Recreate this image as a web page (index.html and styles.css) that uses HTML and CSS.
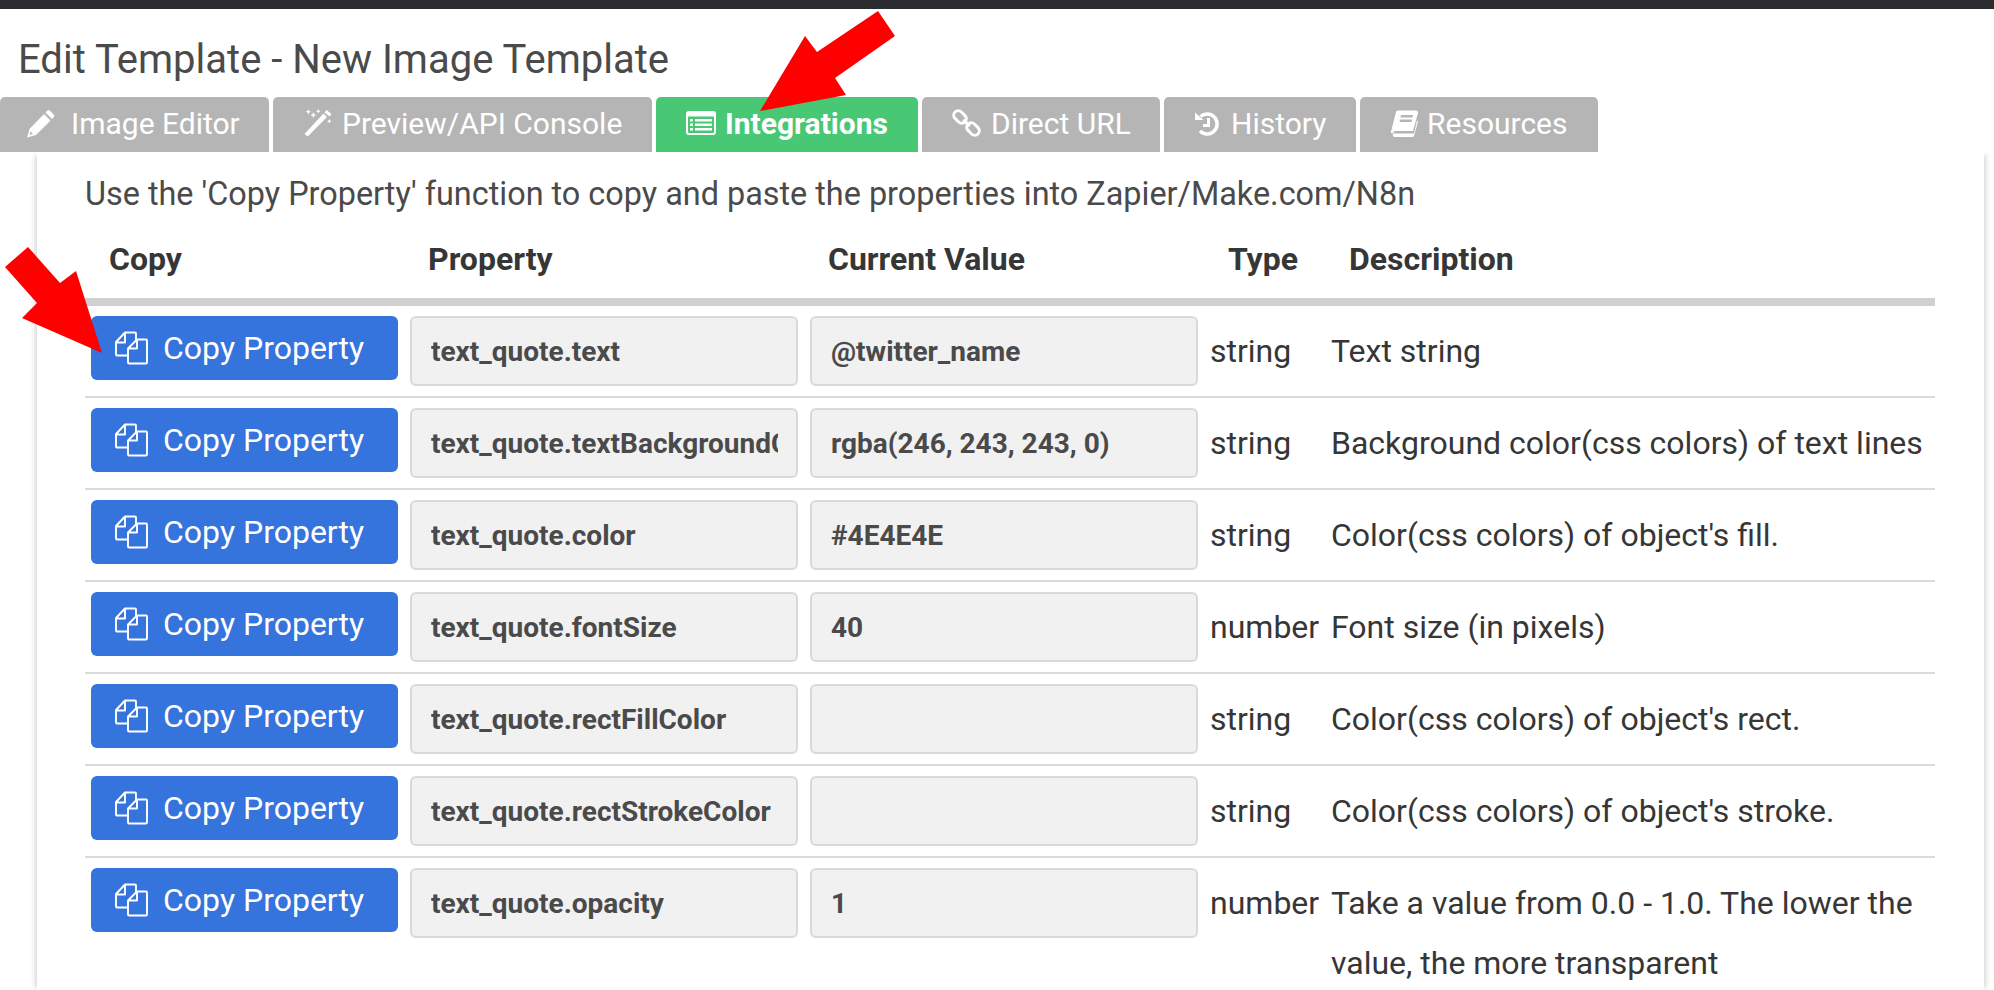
FILE: index.html
```html
<!DOCTYPE html>
<html lang="en">
<head>
<meta charset="utf-8">
<title>Edit Template</title>
<link rel="stylesheet" href="styles.css">
</head>
<body>
<svg width="0" height="0" class="defs">
  <symbol id="i-copy" viewBox="0 0 33 34">
    <path d="M21 9V2.500a1 1 0 0 0-1-1H10L1 11v12.500a1 1 0 0 0 1 1H13M10 1.500V11.500H1" fill="none" stroke="currentColor" stroke-width="1.900" stroke-linejoin="round"/>
    <path d="M22 8.500H31a1 1 0 0 1 1 1V31.500a1 1 0 0 1-1 1H14a1 1 0 0 1-1-1V17.500zM22 8.500V17.500H13" fill="none" stroke="currentColor" stroke-width="1.900" stroke-linejoin="round"/>
  </symbol>
</svg>
<header class="topbar"></header>
<h1 class="title">Edit Template - New Image Template</h1>
<nav class="tabs">
  <a class="tab t1"><svg class="tab-icon" viewBox="0 0 30 30"><path fill="currentColor" fill-rule="evenodd" d="M2.500 20L17 5l6.500 6.500L9 26 0 28.500zM3.500 22.500l-1 3.500 3.500-1zM18.500 3.500l1.700-1.700a2 2 0 0 1 2.800 0l3.700 3.700a2 2 0 0 1 0 2.800L25 10z"/></svg><span>Image Editor</span></a>
  <a class="tab t2"><svg class="tab-icon" viewBox="0 0 30 30"><path fill="currentColor" d="M1.500 25L20.500 4.500l3.500 3.500L4.700 27.500zM21.500 3.500l2-2.500 5 4-2 2.500zM5.300 0l.8 2 2 .8-2 .8-.8 2-.8-2-2-.8 2-.8zM10.300 3l.9 2.200 2.200.9-2.200.9-.9 2.200-.9-2.200-2.200-.9 2.200-.9zM15.300 0l.7 1.600 1.600.7-1.600.7-.7 1.600-.7-1.600-1.600-.7 1.600-.7zM26.300 10l.7 1.600 1.600.7-1.600.7-.7 1.600-.7-1.600-1.600-.7 1.600-.7z"/></svg><span>Preview/API Console</span></a>
  <a class="tab t3 active"><svg class="tab-icon" viewBox="0 0 30 30"><path fill="currentColor" fill-rule="evenodd" d="M3 2h24a3 3 0 0 1 3 3v18a3 3 0 0 1-3 3H3a3 3 0 0 1-3-3V5a3 3 0 0 1 3-3zm-1 5.500V23a1 1 0 0 0 1 1h24a1 1 0 0 0 1-1V7.500zM4 10h3v2.500H4zm5 0h17v2.500H9zM4 14.500h3V17H4zm5 0h17V17H9zM4 19h3v2.500H4zm5 0h17v2.500H9z"/></svg><span>Integrations</span></a>
  <a class="tab t4"><svg class="tab-icon" viewBox="0 0 30 30"><g fill="none" stroke="currentColor" stroke-width="3"><rect x="-7" y="-4.500" width="14" height="9" rx="4.500" transform="translate(8 8) rotate(45)"/><rect x="-7" y="-4.500" width="14" height="9" rx="4.500" transform="translate(21 20) rotate(45)"/><path d="M11 11l7 6"/></g></svg><span>Direct URL</span></a>
  <a class="tab t5"><svg class="tab-icon narrow" viewBox="0 0 28 30"><path fill="none" stroke="currentColor" stroke-width="3.500" d="M6.500 7.500a10 10 0 1 1-.5 14.500"/><path fill="currentColor" d="M1 3.500l8.500 7.500H1zM13 9h3v9H9v-3h4z"/></svg><span>History</span></a>
  <a class="tab t6"><svg class="tab-icon narrow" viewBox="0 0 28 30"><path fill="currentColor" fill-rule="evenodd" d="M8 1.500h18a2 2 0 0 1 2 2.500l-5 18H5.500a2.500 2.500 0 0 0-2.500 2.200L.7 24 6 3a2 2 0 0 1 2-1.500zM11 6l-.5 2.500h12L23 6zM10 10.500l-.5 2.500h12l.5-2.500z"/><path fill="currentColor" d="M3 24.500h21l3-13 1 1-4 14.500a1.500 1.500 0 0 1-1.500 1H4a3 3 0 0 1-1-3.500z"/></svg><span>Resources</span></a>
</nav>
<main class="panel">
  <p class="intro">Use the 'Copy Property' function to copy and paste the properties into Zapier/Make.com/N8n</p>
  <table class="props">
    <thead>
      <tr><th class="c-copy">Copy</th><th class="c-prop">Property</th><th class="c-val">Current Value</th><th class="c-type">Type</th><th class="c-desc">Description</th></tr>
    </thead>
    <tbody>
      <tr><td class="cell-btn"><button class="copy"><svg class="copy-icon"><use href="#i-copy"/></svg>Copy Property</button></td><td class="cell-input"><input class="field" readonly value="text_quote.text"></td><td class="cell-input"><input class="field" readonly value="@twitter_name"></td><td class="cell-type">string</td><td class="cell-desc">Text string</td></tr>
      <tr><td class="cell-btn"><button class="copy"><svg class="copy-icon"><use href="#i-copy"/></svg>Copy Property</button></td><td class="cell-input"><input class="field" readonly value="text_quote.textBackgroundColor"></td><td class="cell-input"><input class="field" readonly value="rgba(246, 243, 243, 0)"></td><td class="cell-type">string</td><td class="cell-desc">Background color(css colors) of text lines</td></tr>
      <tr><td class="cell-btn"><button class="copy"><svg class="copy-icon"><use href="#i-copy"/></svg>Copy Property</button></td><td class="cell-input"><input class="field" readonly value="text_quote.color"></td><td class="cell-input"><input class="field" readonly value="#4E4E4E"></td><td class="cell-type">string</td><td class="cell-desc">Color(css colors) of object's fill.</td></tr>
      <tr><td class="cell-btn"><button class="copy"><svg class="copy-icon"><use href="#i-copy"/></svg>Copy Property</button></td><td class="cell-input"><input class="field" readonly value="text_quote.fontSize"></td><td class="cell-input"><input class="field" readonly value="40"></td><td class="cell-type">number</td><td class="cell-desc">Font size (in pixels)</td></tr>
      <tr><td class="cell-btn"><button class="copy"><svg class="copy-icon"><use href="#i-copy"/></svg>Copy Property</button></td><td class="cell-input"><input class="field" readonly value="text_quote.rectFillColor"></td><td class="cell-input"><input class="field" readonly value=""></td><td class="cell-type">string</td><td class="cell-desc">Color(css colors) of object's rect.</td></tr>
      <tr><td class="cell-btn"><button class="copy"><svg class="copy-icon"><use href="#i-copy"/></svg>Copy Property</button></td><td class="cell-input"><input class="field" readonly value="text_quote.rectStrokeColor"></td><td class="cell-input"><input class="field" readonly value=""></td><td class="cell-type">string</td><td class="cell-desc">Color(css colors) of object's stroke.</td></tr>
      <tr><td class="cell-btn"><button class="copy"><svg class="copy-icon"><use href="#i-copy"/></svg>Copy Property</button></td><td class="cell-input"><input class="field" readonly value="text_quote.opacity"></td><td class="cell-input"><input class="field" readonly value="1"></td><td class="cell-type">number</td><td class="cell-desc">Take a value from 0.0 - 1.0. The lower the value, the more transparent</td></tr>
    </tbody>
  </table>
</main>
<svg class="arrows" width="1994" height="990" viewBox="0 0 1994 990">
  <polygon fill="#ff0000" points="760,111 805,36 817,52 878,11 895,36 835,78 846,95"/>
  <polygon fill="#ff0000" points="102,353 22,318 37,303 5,267 28,247 60,283 76,271"/>
</svg>
</body>
</html>
```
FILE: styles.css
```css
* { box-sizing: border-box; }
html, body { margin: 0; padding: 0; height: 990px; overflow: hidden; }
body { background: #fff; font-family: Roboto, "Liberation Sans", sans-serif; color: #363636; position: relative; }
.defs { position: absolute; }
.topbar { height: 9px; background: #2b2c2f; }
.title { margin: 0; height: 88px; padding: 28px 0 0 18px; font-size: 40px; line-height: 46px; font-weight: 400; color: #4a4a4a; }
.tabs { display: flex; height: 55px; gap: 4px; }
.tab { display: flex; align-items: center; gap: 9px; height: 55px; padding: 0 0 2px 30px; background: #b5b5b5; color: #fff; font-size: 30px; border-radius: 5px 5px 0 0; }
.tab.active { background: #48c774; font-weight: 700; }
.t1 { width: 269px; padding-left: 27px; gap: 14px; } .t2 { width: 379px; } .t3 { width: 262px; } .t4 { width: 238px; } .t5 { width: 192px; } .t6 { width: 238px; }
.tab-icon { width: 30px; height: 30px; flex: none; }
.tab-icon.narrow { width: 28px; }
.panel { margin: 1px 10px 0 37px; height: 837px; padding: 0 49px 0 48px; box-shadow: -4px 0 5px -2px rgba(0,0,0,.16), 4px 0 5px -2px rgba(0,0,0,.16); clip-path: inset(0 -10px 0 -10px); }
.intro { margin: 0; padding: 21px 0 0 0; font-size: 32.400px; line-height: 40px; height: 72px; color: #4a4a4a; white-space: nowrap; }
.props { border-collapse: collapse; table-layout: fixed; width: 1850px; }
.props th { text-align: left; font-size: 32px; font-weight: 700; height: 77px; padding: 0 0 6px 24px; border-bottom: 8px solid #d0d0d0; color: #363636; }
.c-copy { width: 319px; } .c-prop, .c-val { width: 400px; } .c-type { width: 121px; }
.props td { vertical-align: top; border-bottom: 2px solid #dbdbdb; }
.cell-btn { padding: 10px 6px 0; }
.cell-input { padding: 10px 6px 0; }
.cell-type, .cell-desc { padding: 15px 6px; font-size: 32px; line-height: 60px; color: #363636; }
.cell-desc { padding-right: 0; }
.copy { display: flex; align-items: center; gap: 15px; width: 307px; height: 64px; padding: 0 0 0 24px; border: 0; border-radius: 6px; background: #3573dd; color: #fff; font: 400 32px Roboto, sans-serif; }
.copy-icon { width: 33px; height: 34px; flex: none; }
.field { display: block; width: 100%; height: 70px; padding: 0 18px 0 19px; border: 2px solid #d9d9d9; border-radius: 6px; background: #f1f1f1; font: 700 28px Roboto, sans-serif; color: #4a4a4a; outline: none; }
.arrows { position: absolute; left: 0; top: 0; pointer-events: none; }
```
